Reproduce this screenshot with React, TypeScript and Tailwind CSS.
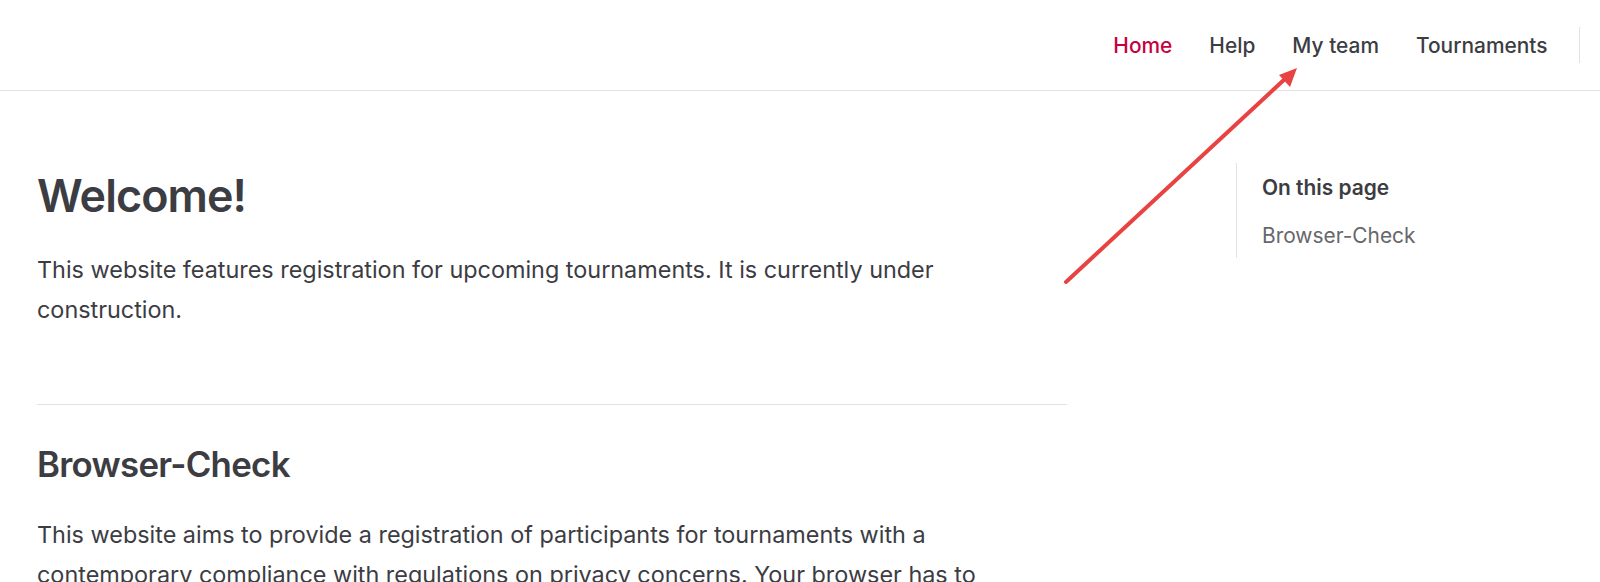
export default function App() {
  const navLinks = ["Home", "Help", "My team", "Tournaments"];

  return (
    <div className="relative min-h-screen bg-white text-[#3c3c43] font-['Inter','Noto_Sans',sans-serif]">
      <header className="h-[91px] border-b border-[#e2e2e3] flex items-center justify-end pr-[20px]">
        <nav className="flex items-center">
          {navLinks.map((link, idx) => (
            <a
              key={link}
              href="#"
              className={
                "px-[18.5px] text-[20.9px] leading-[45px] font-medium " +
                (idx === 0 ? "text-[#c7003f]" : "text-[#3c3c43]")
              }
            >
              {link}
            </a>
          ))}
        </nav>
        <div className="ml-[13px] w-px h-[36px] bg-[#e2e2e3]" />
      </header>

      <div className="flex">
        <main className="w-[1030px] ml-[37px]">
          <h1 className="mt-[77px] text-[44.8px] leading-[56px] font-semibold tracking-[-0.02em]">
            Welcome!
          </h1>
          <p className="mt-[26px] text-[23.4px] leading-[39.6px]">
            This website features registration for upcoming tournaments. It is currently under
            construction.
          </p>

          <h2 className="mt-[75px] border-t border-[#e2e2e3] pt-[37px] text-[34.8px] leading-[44.8px] font-semibold tracking-[-0.02em]">
            Browser-Check
          </h2>
          <p className="mt-[28px] text-[23.4px] leading-[39.6px]">
            This website aims to provide a registration of participants for tournaments with a
            contemporary compliance with regulations on privacy concerns. Your browser has to
            support some modern features in order to use this website. Please check the results
            below before you continue.
          </p>
        </main>

        <aside className="ml-[169px] mt-[72px] self-start">
          <div className="border-l border-[#e2e2e3] pl-[25px] pt-[2px] w-[300px]">
            <div className="text-[20.9px] leading-[45px] font-semibold">On this page</div>
            <a href="#" className="mt-[3px] block text-[20.9px] leading-[45px] text-[#67676c]">
              Browser-Check
            </a>
          </div>
        </aside>
      </div>

      {/* annotation arrow */}
      <svg
        className="absolute left-0 top-0 pointer-events-none"
        width="1600"
        height="582"
        viewBox="0 0 1600 582"
      >
        <line x1="1066" y1="282" x2="1286" y2="78" stroke="#e84242" strokeWidth="4" strokeLinecap="round" />
        <polygon points="1297,68 1279,75 1290,87" fill="#e84242" />
      </svg>
    </div>
  );
}
